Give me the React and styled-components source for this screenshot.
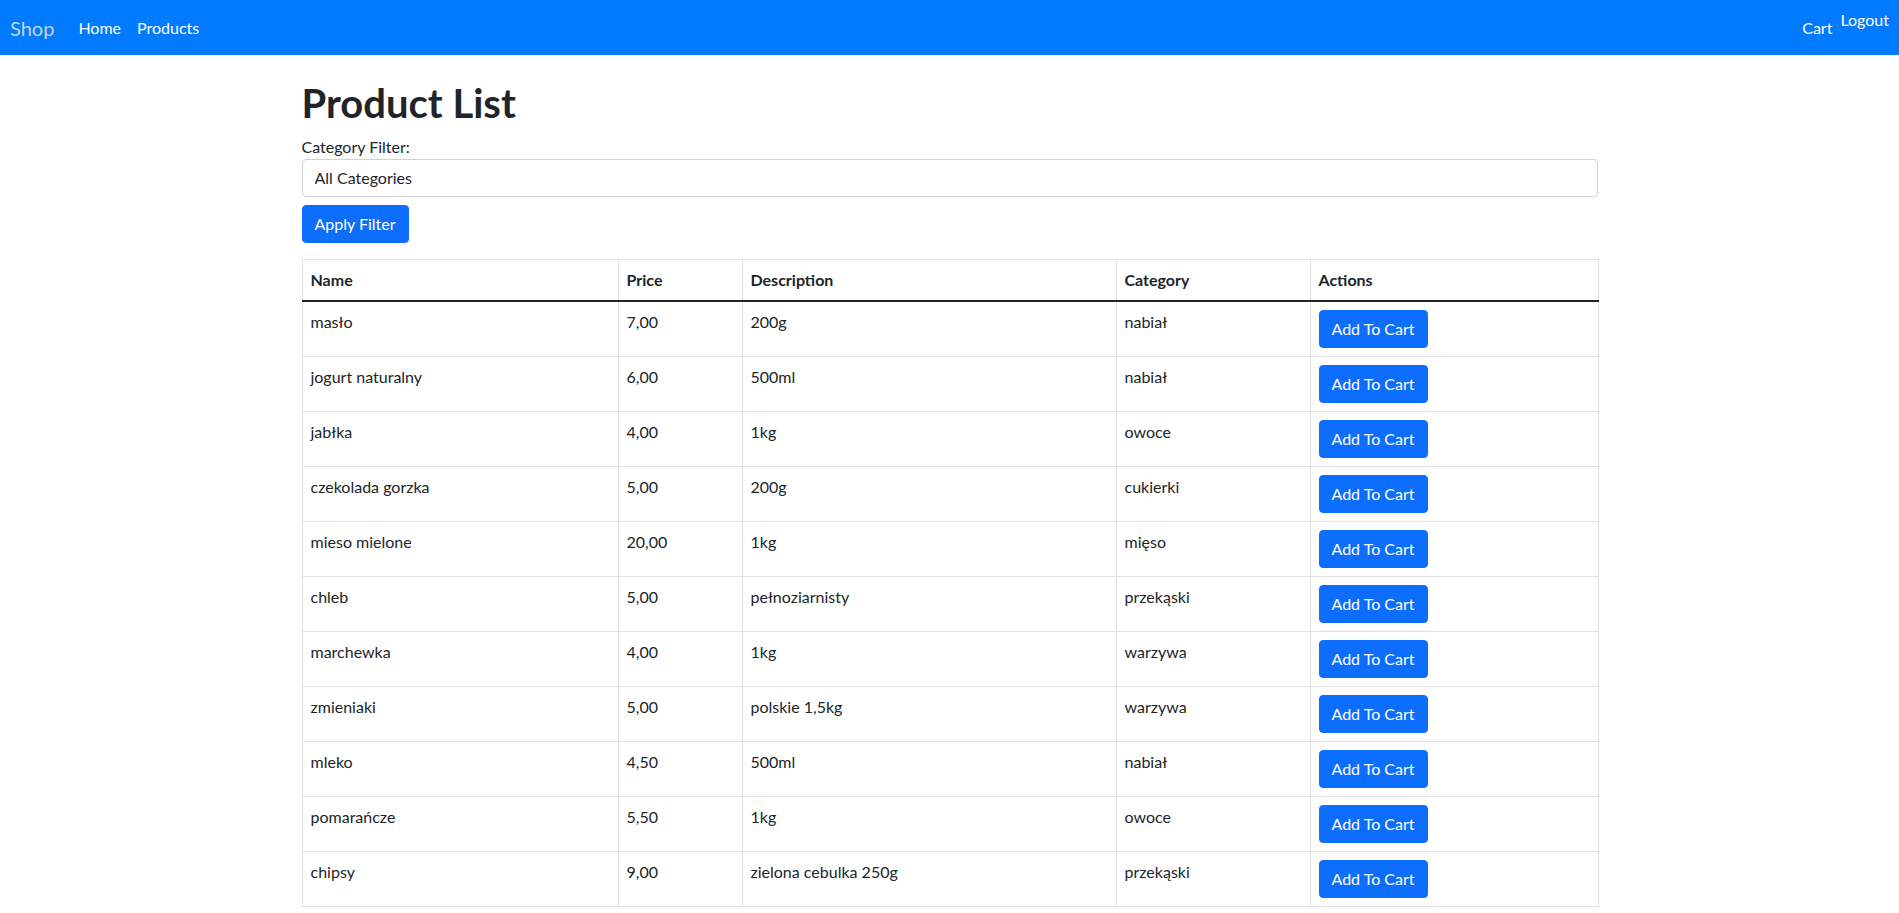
import styled, { createGlobalStyle } from "styled-components";

const GlobalStyle = createGlobalStyle`
    *, *::before, *::after {
        box-sizing: border-box;
    }

    body {
        margin: 0;
        font-family: Lato, "Noto Sans", sans-serif;
        font-size: 16px;
        line-height: 1.5;
        color: #212529;
        background: #fff;
    }
`;

const products = [
    { name: "masło", price: "7,00", description: "200g", category: "nabiał" },
    { name: "jogurt naturalny", price: "6,00", description: "500ml", category: "nabiał" },
    { name: "jabłka", price: "4,00", description: "1kg", category: "owoce" },
    { name: "czekolada gorzka", price: "5,00", description: "200g", category: "cukierki" },
    { name: "mieso mielone", price: "20,00", description: "1kg", category: "mięso" },
    { name: "chleb", price: "5,00", description: "pełnoziarnisty", category: "przekąski" },
    { name: "marchewka", price: "4,00", description: "1kg", category: "warzywa" },
    { name: "zmieniaki", price: "5,00", description: "polskie 1,5kg", category: "warzywa" },
    { name: "mleko", price: "4,50", description: "500ml", category: "nabiał" },
    { name: "pomarańcze", price: "5,50", description: "1kg", category: "owoce" },
    { name: "chipsy", price: "9,00", description: "zielona cebulka 250g", category: "przekąski" },
];

const columns = [
    { title: "Name", width: 316 },
    { title: "Price", width: 124 },
    { title: "Description", width: 374 },
    { title: "Category", width: 194 },
    { title: "Actions", width: 288 },
];

const Navbar = styled.nav`
    display: flex;
    align-items: flex-start;
    height: 55px;
    padding: 8px 10px;
    background-color: #007bff;
`;

const Brand = styled.a`
    padding: 5px 0;
    margin-right: 16px;
    font-size: 20px;
    line-height: 30px;
    color: #c9d3e6;
    text-decoration: none;
`;

const NavLinks = styled.div`
    display: flex;
    align-items: flex-start;
    margin-right: ${props => props.$end ? "0" : "auto"};
`;

const NavLink = styled.a`
    padding: 8px;
    color: #fff;
    text-decoration: none;
`;

const LogoutButton = styled.button`
    padding: 0;
    border: 0;
    background: none;
    font: inherit;
    line-height: 24px;
    color: #fff;
    cursor: pointer;
`;

const Container = styled.main`
    max-width: 1320px;
    margin: 0 auto;
    padding: 0 12px;
`;

const Title = styled.h1`
    margin: 24px 0 8px;
    font-size: 40px;
    font-weight: 700;
    line-height: 1.2;
`;

const Label = styled.label`
    display: block;
`;

const Select = styled.select`
    display: block;
    width: 100%;
    height: 38px;
    padding: 6px 36px 6px 12px;
    border: 1px solid #ced4da;
    border-radius: 4px;
    background: #fff;
    font: inherit;
    color: #212529;
    appearance: none;
`;

const Button = styled.button`
    display: inline-block;
    margin-top: ${props => props.$spaced ? "8px" : "0"};
    padding: 6px 12px;
    border: 1px solid #0d6efd;
    border-radius: 4px;
    background-color: #0d6efd;
    font: inherit;
    line-height: 24px;
    color: #fff;
    cursor: pointer;
`;

const Table = styled.table`
    width: 100%;
    margin: 16px 0;
    border-collapse: collapse;
    table-layout: fixed;
    border: 1px solid #dee2e6;
`;

const Col = styled.col`
    width: ${props => props.$width}px;
`;

const Body = styled.tbody`
    border-top: 2px solid #212529;
`;

const Th = styled.th`
    padding: 8px;
    border: 1px solid #dee2e6;
    text-align: left;
    vertical-align: top;
    font-weight: 700;
`;

const Td = styled.td`
    padding: 8px;
    border: 1px solid #dee2e6;
    vertical-align: top;
`;

export default function App() {
    return (
        <>
            <GlobalStyle />
            <Navbar>
                <Brand href="#">Shop</Brand>
                <NavLinks>
                    <NavLink href="#">Home</NavLink>
                    <NavLink href="#">Products</NavLink>
                </NavLinks>
                <NavLinks $end>
                    <NavLink href="#">Cart</NavLink>
                    <LogoutButton>Logout</LogoutButton>
                </NavLinks>
            </Navbar>
            <Container>
                <Title>Product List</Title>
                <Label htmlFor="category">Category Filter:</Label>
                <Select id="category" defaultValue="">
                    <option value="">All Categories</option>
                </Select>
                <Button $spaced>Apply Filter</Button>
                <Table>
                    <colgroup>
                        {columns.map((col) => <Col key={col.title} $width={col.width} />)}
                    </colgroup>
                    <thead>
                        <tr>
                            {columns.map((col) => <Th key={col.title}>{col.title}</Th>)}
                        </tr>
                    </thead>
                    <Body>
                        {products.map((product, index) => (
                            <tr key={index}>
                                <Td>{product.name}</Td>
                                <Td>{product.price}</Td>
                                <Td>{product.description}</Td>
                                <Td>{product.category}</Td>
                                <Td>
                                    <Button>Add To Cart</Button>
                                </Td>
                            </tr>
                        ))}
                    </Body>
                </Table>
            </Container>
        </>
    );
}
